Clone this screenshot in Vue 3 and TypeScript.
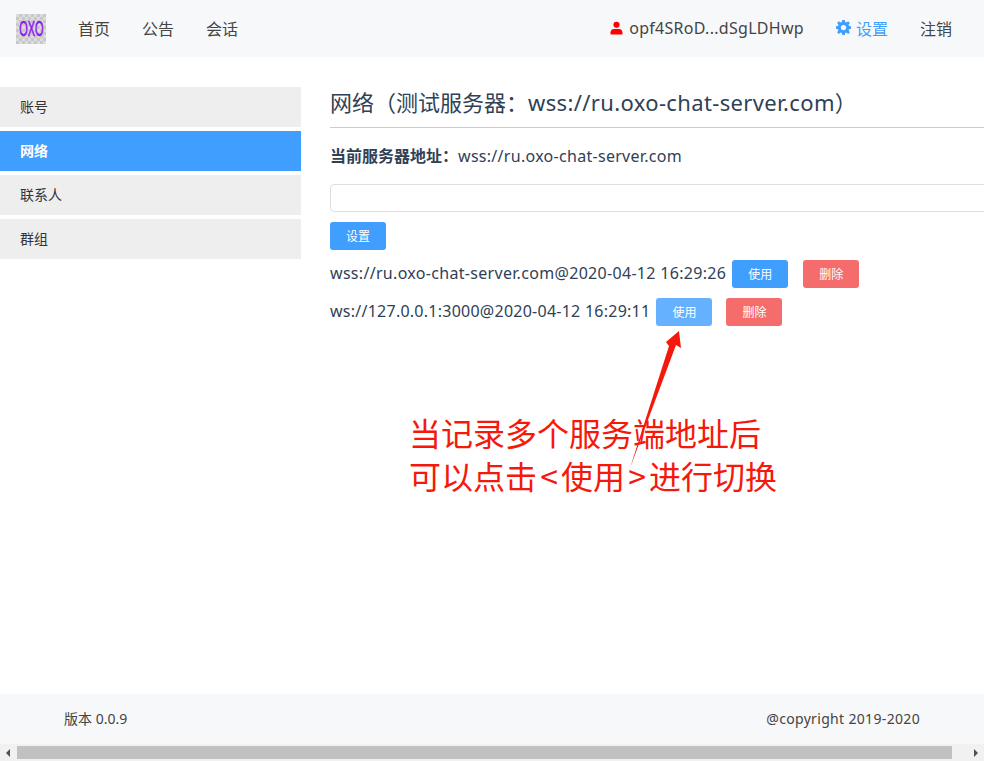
<script setup lang="ts">
const navItems: string[] = ['首页', '公告', '会话']
const sideItems: { label: string; active: boolean }[] = [
  { label: '账号', active: false },
  { label: '网络', active: true },
  { label: '联系人', active: false },
  { label: '群组', active: false },
]
const servers: { text: string; hover: boolean; kind: string }[] = [
  { text: 'wss://ru.oxo-chat-server.com@2020-04-12 16:29:26', hover: false, kind: 'long' },
  { text: 'ws://127.0.0.1:3000@2020-04-12 16:29:11', hover: true, kind: 'short' },
]
</script>

<template>
  <div class="page">
    <div class="viewport">
      <div class="canvas">
        <header class="top">
          <div class="logo"><span class="logo-text">OXO</span></div>
          <nav class="nav">
            <span v-for="n in navItems" :key="n" class="nav-item">{{ n }}</span>
          </nav>
          <div class="right">
            <span class="user">
              <svg class="user-ico" viewBox="0 0 14 14" width="13" height="14">
                <circle cx="7" cy="3.6" r="3.3" fill="#f00" />
                <path d="M0.6 14v-2.4c0-2.4 2-3.6 3.6-3.6h5.600c1.600 0 3.600 1.200 3.600 3.600V14z" fill="#f00" />
              </svg>
              <span class="latin">opf4SRoD...dSgLDHwp</span>
            </span>
            <span class="setting">
              <svg class="gear" viewBox="0 0 24 24" width="15" height="15">
                <path fill="#409eff" fill-rule="evenodd" d="M10 0h4l.7 3.300 1.900.8L19.400 2l2.800 2.800-2.100 2.800.8 1.900L24 10v4l-3.100.6-.8 1.900 2.100 2.900-2.800 2.800-2.800-2.100-1.900.8L14 24h-4l-.6-3.100-1.900-.8-2.900 2.100L1.800 19.400l2.100-2.900-.8-1.900L0 14v-4l3.100-.5.8-1.900L1.800 4.800 4.600 2l2.800 2.100 1.900-.8zM12 7.800a4.200 4.200 0 1 0 0 8.400 4.200 4.200 0 0 0 0-8.400z" />
              </svg>
              设置
            </span>
            <span class="logout">注销</span>
          </div>
        </header>

        <main class="body">
          <aside class="side">
            <div v-for="s in sideItems" :key="s.label" class="side-item" :class="{ active: s.active }">{{ s.label }}</div>
          </aside>
          <section class="content">
            <h2 class="title">网络（测试服务器：<span class="title-latin">wss://ru.oxo-chat-server.com</span>）</h2>
            <div class="current"><b>当前服务器地址：</b><span class="latin">wss://ru.oxo-chat-server.com</span></div>
            <div class="input"></div>
            <button class="btn primary set">设置</button>
            <div v-for="s in servers" :key="s.text" class="row">
              <span class="addr" :class="s.kind">{{ s.text }}</span>
              <button class="btn primary" :class="{ hover: s.hover }">使用</button>
              <button class="btn danger">删除</button>
            </div>
          </section>
        </main>

        <footer class="foot">
          <span>版本 0.0.9</span>
          <span class="copy">@copyright 2019-2020</span>
        </footer>
      </div>

      <svg class="arrow" viewBox="0 0 984 761" width="984" height="761">
        <polygon fill="#f5190b" points="630,468 669,346 666,342 679,331 681,348 676,345" />
      </svg>
      <div class="note">
        <div>当记录多个服务端地址后</div>
        <div>可以点击<span class="bracket">&lt;</span>使用<span class="bracket">&gt;</span>进行切换</div>
      </div>
    </div>

    <div class="scrollbar">
      <span class="tri left"></span>
      <div class="track"><div class="thumb"></div></div>
      <span class="tri right"></span>
    </div>
  </div>
</template>

<style>
html, body { margin: 0; padding: 0; background: #fff; overflow: hidden; }
</style>

<style scoped>
.page {
  width: 984px;
  height: 761px;
  display: flex;
  flex-direction: column;
  overflow: hidden;
  font-family: "Noto Sans", "Noto Sans CJK SC", sans-serif;
  color: #303133;
  font-size: 15px;
}
.viewport {
  position: relative;
  flex: 1;
  overflow: hidden;
  min-height: 0;
}
.canvas {
  width: 1000px;
  height: 744px;
  display: flex;
  flex-direction: column;
}
.top {
  height: 57px;
  background: #f7f8fa;
  display: flex;
  align-items: center;
  padding: 0 32px 2px 16px;
  box-sizing: border-box;
  width: 984px;
}
.logo {
  width: 30px;
  height: 30px;
  margin-top: 2px;
  background-color: #dcdcdc;
  background-image: conic-gradient(#c8c8c8 25%, transparent 0 50%, #c8c8c8 0 75%, transparent 0);
  background-size: 6px 6px;
  display: flex;
  align-items: center;
  justify-content: center;
}
.logo-text {
  color: #8a14f5;
  font-family: "Liberation Sans", sans-serif;
  font-size: 22px;
  font-weight: 400;
  line-height: 1;
  transform: scaleX(0.5);
  -webkit-text-stroke: 0.6px #8a14f5;
}
.nav {
  display: flex;
  gap: 32px;
  margin-left: 32px;
}
.nav-item { font-size: 16px; color: #444; }
.right {
  margin-left: auto;
  display: flex;
  align-items: center;
  font-size: 16px;
  color: #444;
}
.user { display: flex; align-items: center; gap: 6px; }
.latin { letter-spacing: 0.29px; }
.setting { display: flex; align-items: center; gap: 5px; color: #409eff; margin-left: 32px; }
.logout { margin-left: 32px; }
.body {
  flex: 1;
  display: flex;
  padding-top: 30px;
  min-height: 0;
}
.side {
  width: 301px;
  display: flex;
  flex-direction: column;
  gap: 4px;
  flex: none;
}
.side-item {
  height: 40px;
  line-height: 39px;
  padding-left: 20px;
  background: #eee;
  font-size: 14px;
  color: #333;
}
.side-item.active {
  background: #409eff;
  color: #fff;
  font-weight: 700;
}
.content {
  flex: 1;
  margin-left: 29px;
  min-width: 0;
}
.title {
  margin: 0;
  height: 40px;
  line-height: 31px;
  font-size: 22px;
  font-weight: 400;
  color: #304156;
  border-bottom: 1px solid #ccc;
}
.title-latin { letter-spacing: 0.36px; }
.current {
  margin-top: 16px;
  line-height: 24px;
  font-size: 16px;
  color: #304156;
}
.current b { font-weight: 700; }
.input {
  margin-top: 16px;
  height: 28px;
  box-sizing: border-box;
  border: 1px solid #dcdfe6;
  border-radius: 4px;
  background: #fff;
}
.btn {
  display: inline-block;
  width: 56px;
  height: 28px;
  padding: 0;
  border: none;
  border-radius: 3px;
  font-family: inherit;
  font-size: 12px;
  color: #fff;
}
.primary { background: #409eff; }
.primary.hover { background: #66b1ff; }
.danger { background: #f56c6c; margin-left: 15px; }
.row .hover + .danger { margin-left: 14px; }
.set { display: block; margin-top: 10px; }
.row {
  display: flex;
  align-items: center;
  height: 28px;
  margin-top: 10px;
}
.addr {
  font-size: 16px;
  color: #304156;
  margin-right: 6px;
  white-space: nowrap;
  position: relative;
  top: -1px;
}
.addr.long { letter-spacing: 0.31px; }
.addr.short { letter-spacing: 0.25px; }
.foot {
  height: 50px;
  background: #f7f8fa;
  display: flex;
  align-items: center;
  justify-content: space-between;
  padding: 0 64px 2px;
  width: 984px;
  box-sizing: border-box;
  font-size: 14px;
  color: #444;
}
.copy { letter-spacing: 0.33px; }
.arrow {
  position: absolute;
  left: 0;
  top: 0;
  pointer-events: none;
}
.note {
  position: absolute;
  left: 409px;
  top: 411px;
  color: #f5190b;
  font-size: 32px;
  line-height: 43px;
  font-family: "Noto Sans CJK SC", sans-serif;
  white-space: nowrap;
}
.bracket { display: inline-block; width: 24px; text-align: center; }
.scrollbar {
  height: 17px;
  flex: none;
  background: #f1f1f1;
  display: flex;
  align-items: center;
}
.track { flex: 1; height: 100%; padding: 2px 0; box-sizing: border-box; }
.thumb { width: 935px; height: 13px; background: #c1c1c1; }
.tri { width: 17px; height: 17px; position: relative; flex: none; }
.tri::after {
  content: "";
  position: absolute;
  top: 5px;
  width: 0;
  height: 0;
  border-top: 4px solid transparent;
  border-bottom: 4px solid transparent;
}
.tri.left::after { left: 6px; border-right: 4px solid #505050; }
.tri.right::after { left: 7px; border-left: 4px solid #505050; }
</style>
